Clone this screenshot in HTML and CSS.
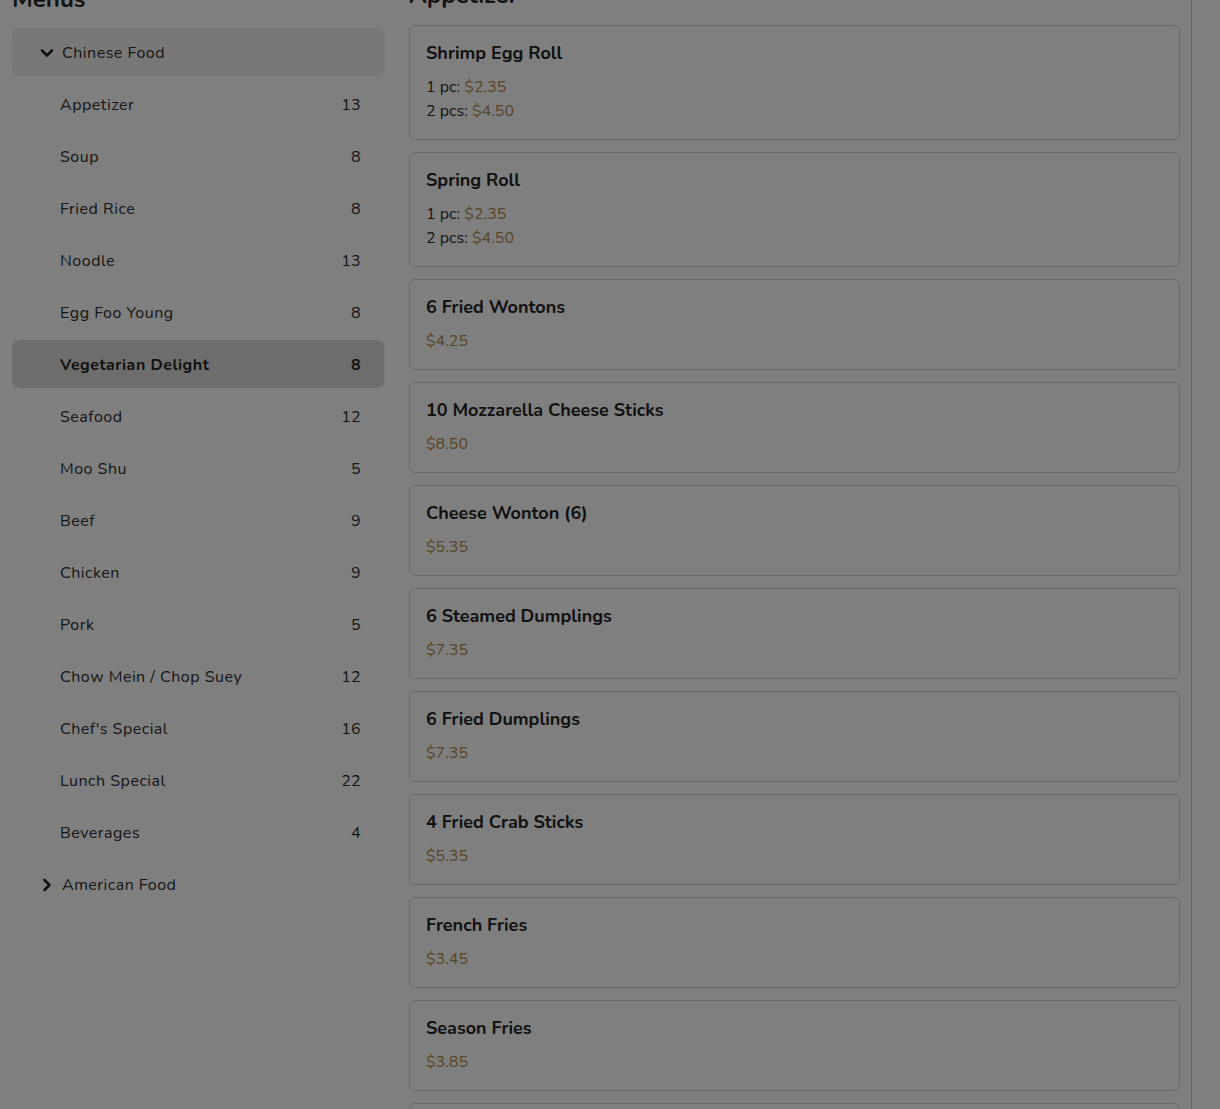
FILE: index.html
```html
<!DOCTYPE html>
<html lang="en">
<head>
<meta charset="utf-8">
<title>Menus</title>
<link rel="stylesheet" href="styles.css">
</head>
<body>
<div class="layout">
  <aside class="sidebar">
    <h2 class="heading">Menus</h2>
    <nav class="nav">
      <div class="group open">
        <svg class="chev" viewBox="0 0 14 14" width="14" height="14"><path d="M2 4.5 L7 9.5 L12 4.5" fill="none" stroke="currentColor" stroke-width="2.6" stroke-linecap="round" stroke-linejoin="round"/></svg>
        <span>Chinese Food</span>
      </div>
      <div class="item"><span>Appetizer</span><span class="count">13</span></div>
      <div class="item"><span>Soup</span><span class="count">8</span></div>
      <div class="item"><span>Fried Rice</span><span class="count">8</span></div>
      <div class="item"><span>Noodle</span><span class="count">13</span></div>
      <div class="item"><span>Egg Foo Young</span><span class="count">8</span></div>
      <div class="item active"><span>Vegetarian Delight</span><span class="count">8</span></div>
      <div class="item"><span>Seafood</span><span class="count">12</span></div>
      <div class="item"><span>Moo Shu</span><span class="count">5</span></div>
      <div class="item"><span>Beef</span><span class="count">9</span></div>
      <div class="item"><span>Chicken</span><span class="count">9</span></div>
      <div class="item"><span>Pork</span><span class="count">5</span></div>
      <div class="item"><span>Chow Mein / Chop Suey</span><span class="count">12</span></div>
      <div class="item"><span>Chef's Special</span><span class="count">16</span></div>
      <div class="item"><span>Lunch Special</span><span class="count">22</span></div>
      <div class="item"><span>Beverages</span><span class="count">4</span></div>
      <div class="group">
        <svg class="chev" viewBox="0 0 14 14" width="14" height="14"><path d="M4.5 2 L9.5 7 L4.5 12" fill="none" stroke="currentColor" stroke-width="2.6" stroke-linecap="round" stroke-linejoin="round"/></svg>
        <span>American Food</span>
      </div>
    </nav>
  </aside>
  <main class="main">
    <h2 class="heading main-heading">Appetizer</h2>
    <div class="cards">
      <div class="card"><div class="title">Shrimp Egg Roll</div><div class="prices"><div>1 pc: <span class="price">$2.35</span></div><div>2 pcs: <span class="price">$4.50</span></div></div></div>
      <div class="card"><div class="title">Spring Roll</div><div class="prices"><div>1 pc: <span class="price">$2.35</span></div><div>2 pcs: <span class="price">$4.50</span></div></div></div>
      <div class="card"><div class="title">6 Fried Wontons</div><div class="prices"><div><span class="price">$4.25</span></div></div></div>
      <div class="card"><div class="title">10 Mozzarella Cheese Sticks</div><div class="prices"><div><span class="price">$8.50</span></div></div></div>
      <div class="card"><div class="title">Cheese Wonton (6)</div><div class="prices"><div><span class="price">$5.35</span></div></div></div>
      <div class="card"><div class="title">6 Steamed Dumplings</div><div class="prices"><div><span class="price">$7.35</span></div></div></div>
      <div class="card"><div class="title">6 Fried Dumplings</div><div class="prices"><div><span class="price">$7.35</span></div></div></div>
      <div class="card"><div class="title">4 Fried Crab Sticks</div><div class="prices"><div><span class="price">$5.35</span></div></div></div>
      <div class="card"><div class="title">French Fries</div><div class="prices"><div><span class="price">$3.45</span></div></div></div>
      <div class="card"><div class="title">Season Fries</div><div class="prices"><div><span class="price">$3.85</span></div></div></div>
      <div class="card"><div class="title">Chicken Wings (4)</div><div class="prices"><div><span class="price">$6.95</span></div></div></div>
    </div>
  </main>
</div>
<div class="backdrop"></div>
</body>
</html>
```

FILE: styles.css
```css
html, body {
  margin: 0;
  padding: 0;
  overflow: hidden;
  height: 100%;
}
body {
  font-family: "Nunito", "Lato", "Noto Sans", sans-serif;
  color: #2e2e2e;
  background: #fff;
}
.layout {
  display: grid;
  grid-template-columns: 372px 783px;
  column-gap: 25px;
  padding-left: 12px;
  margin-top: -17px;
}
.heading {
  margin: 0 0 13px 0;
  font-size: 24px;
  line-height: 32px;
  font-weight: 700;
  color: #2a2a2a;
}
.main-heading {
  margin-top: -4px;
  margin-bottom: 14px;
}
.nav {
  display: flex;
  flex-direction: column;
  gap: 4px;
}
.group, .item {
  height: 48px;
  display: flex;
  align-items: center;
  border-radius: 8px;
  font-size: 16px;
  letter-spacing: 0.5px;
  padding-top: 1px;
  box-sizing: border-box;
}
.group {
  padding-left: 28px;
  gap: 8px;
}
.group.open {
  background: #f3f0ec;
  box-shadow: 0 0 4px rgba(0, 0, 0, 0.05);
}
.chev {
  flex: none;
  color: #222;
}
.item {
  padding-right: 23px;
  padding-left: 48px;
  justify-content: space-between;
}
.count {
  letter-spacing: 0.3px;
}
.item.active {
  background: #dddad7;
  font-weight: 700;
  color: #222;
  box-shadow: 0 0 4px rgba(0, 0, 0, 0.05);
}
.main {
  padding-right: 11px;
  border-right: 1px solid #cfcfcf;
  min-height: 1200px;
}
.cards {
  display: flex;
  flex-direction: column;
  gap: 12px;
}
.card {
  border: 1px solid #d4d4d4;
  border-radius: 6px;
  padding: 16px;
  background: #fff;
}
.title {
  font-size: 18px;
  line-height: 22px;
  font-weight: 700;
  color: #222;
  margin-bottom: 11px;
}
.prices {
  font-size: 16px;
  line-height: 24px;
  color: #2e2e2e;
}
.price {
  color: #b08c50;
}
.backdrop {
  position: fixed;
  inset: 0;
  background: rgba(0, 0, 0, 0.5);
}
```
